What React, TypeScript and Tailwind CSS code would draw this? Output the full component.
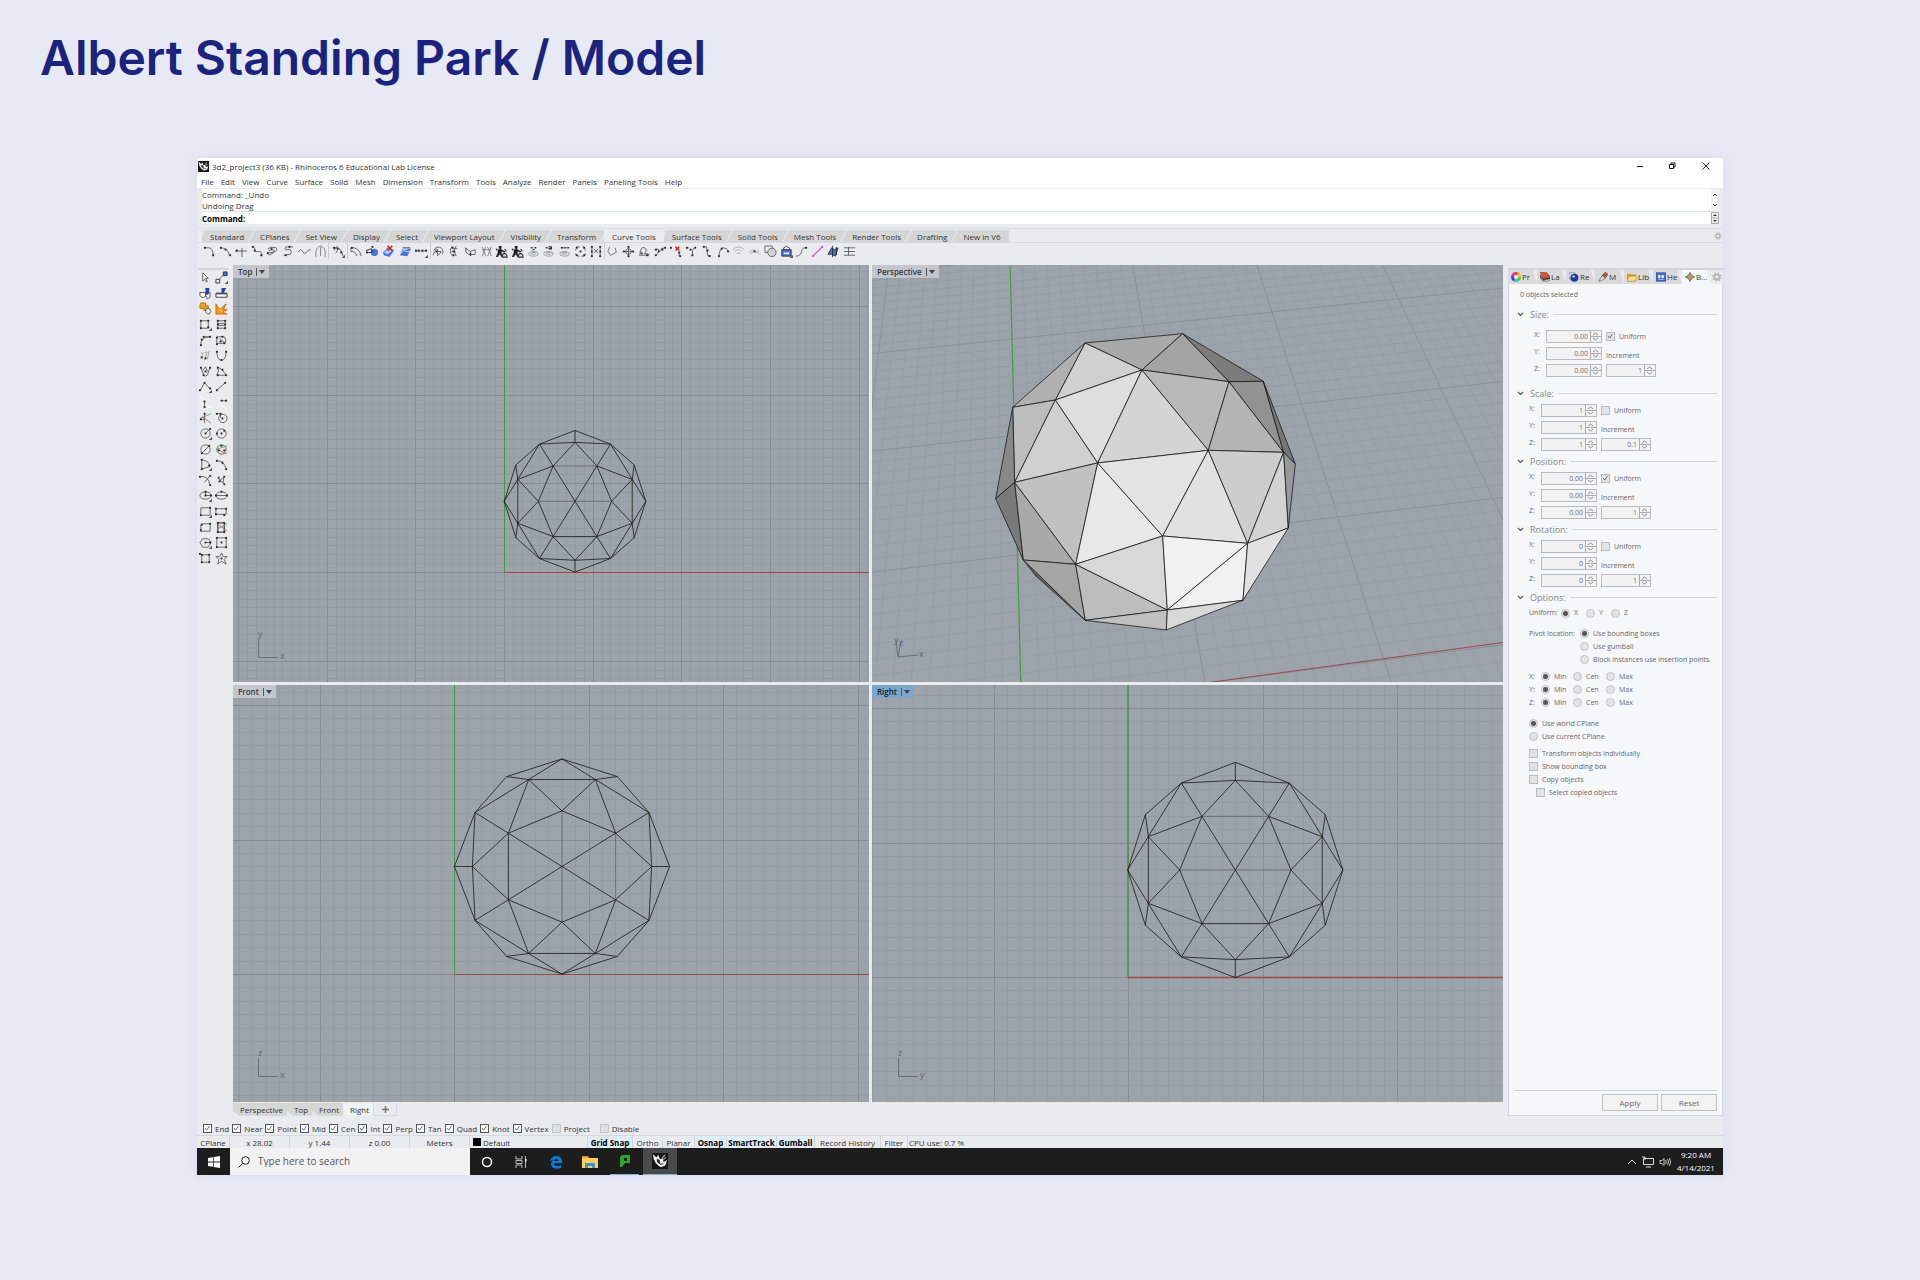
import React from "react";

type Part = { d: string; s?: string; f?: string; w?: number };
type IconDef = { p: Part[]; dots?: number[][]; menu?: boolean };

const INK = "#505050";
const BLUE = "#4a74d8";

function Glyph({ icon }: { icon: IconDef }) {
  return (
    <svg viewBox="0 0 14 14" className="h-[13px] w-[13px] shrink-0" aria-hidden="true">
      {icon.p.map((q, i) => (
        <path key={i} d={q.d} fill={q.f ?? "none"} stroke={q.s ?? (q.f ? "none" : INK)} strokeWidth={q.w ?? 0.9} />
      ))}
      {(icon.dots ?? []).map(([x, y], i) => (
        <rect key={i} x={x - 1} y={y - 1} width={2} height={2} fill="#2a2a2a" />
      ))}
      {icon.menu && <path d="M14 10.500v3.500h-3.500z" fill="#555" />}
    </svg>
  );
}

const k = (d: string, dots?: number[][], menu?: boolean, s?: string): IconDef => ({ p: [{ d, s }], dots, menu });

const person: IconDef = {
  p: [
    { d: "M4 1h3v3h-3zM3 5l3-1 3 2 2 1-1 1-3-1v2l2 4h-2l-2-3-2 3h-2l2-5z", f: "#222" },
    { d: "M8 13q0-4 2-4q3 1 3 4zM10 5q2 0 2 2M1 4l2 2", s: "#333", w: 1.2 },
  ],
};
const disc = (d: string): IconDef => ({
  p: [
    { d: "M2 9.500a5 2.500 0 1 0 10 0a5 2.500 0 1 0-10 0M4.500 9a2.500 1 0 1 0 5 0a2.500 1 0 1 0-5 0", s: "#8a8a8a" },
    { d, s: "#333", w: 1.5 },
  ],
});

const toolGroups: { w: string; icons: IconDef[] }[] = [
  {
    w: "w-[126px]",
    icons: [
      k("M1 3h5q5 0 5 9", [[2, 3], [11, 11]]),
      k("M1 3q9 0 10 8", [[2, 3], [7, 5], [12, 11]]),
      k("M0 6.500h13M7.500 3v10", [[2, 6]]),
      k("M1 2q4 0 3 4q0 2 4 1q4-1 4 5", [[2, 2], [4, 6], [11, 11]]),
      k("M2 4q4-3 9-1q2 2-1 4q-5 2-9 1M3 6q5-2 6 0q0 3-6 5", [[2, 9], [6, 4]]),
      k("M12 2h-6q-4 0-2 3h5q2 2 0 5l-7 1", [[8, 2], [4, 11]]),
      k("M0 8q3-5 5-1t5 0t3-1"),
      k("M2 13v-5q0-5 5-7q5 2 5 7v5M7 2v10", undefined, false, "#777"),
    ],
  },
  { w: "w-[19px]", icons: [k("M1 3q8-1 9 4l2 5M2 6l4-5M7 4l-3 5", [[2, 3], [6, 4], [10, 8]], true)] },
  {
    w: "w-[83px]",
    icons: [
      k("M1 3q9-1 11 9M1 7q5-1 6 5M1 3v4", [[2, 3]]),
      { p: [{ d: "M5 8a4 4 0 1 0 8 0a4 4 0 1 0-8 0", f: BLUE }, { d: "M0 6l6-2 1 4M1 8h5", s: "#222" }], dots: [[1, 8], [7, 2]] },
      { p: [{ d: "M1 8l6-6 6 4-5 7-6-2z", f: BLUE }, { d: "M2 8l5-4 4 2-5 4z", f: "#b9cbf5" }, { d: "M6 1l5 5M11 1l-5 5", s: "#e03030", w: 2 }] },
      { p: [{ d: "M1 11l3-7h9l-4 8z", f: BLUE }, { d: "M4 4l3 3h6M2 9q4-6 7-4", s: "#dbe5fb" }, { d: "M4 3h8", s: "#333" }] },
      k("M0 6.500h13", [[1, 6], [4, 6], [8, 6], [12, 6]], true),
    ],
  },
  {
    w: "w-[174px]",
    icons: [
      k("M2 6a5 5 0 1 1 9 4M1 11q4-9 5-6v7M4 7h6l-3 4", [[5, 7]]),
      k("M5 1q-5 5 0 11M9 1q-4 4 0 11M5 4h5M4 7h4", [[5, 3], [6, 7], [6, 11]]),
      k("M1 3l6 4 5-2M2 8q4 4 10 2M2 3v5M7 7v5M12 5v5", [[7, 10]]),
      k("M2 2q4 5 0 10M6 2q-3 5 0 10M8 2q4 5 0 10M12 2q-3 5 0 10M2 5h10", undefined, false, "#777"),
      person,
      person,
      disc("M4 3h2M8 3h2M6 5h2"),
      disc("M4 3h2M7 2h3v2h-3"),
      disc("M3 3h3M7 3h2M10 3h2"),
      k("M3 2h3M9 2h2M2 4v2M12 4v2M2 9v2M12 9v2M4 12h2M8 12h3", [[3, 3], [11, 3], [3, 11], [11, 11], [7, 7]]),
      k("M2 1v12M11 1v12M4 4l5 5M4 9l5-5", [[2, 2], [2, 7], [2, 12], [11, 2], [11, 7], [11, 12]]),
    ],
  },
  {
    w: "w-[253px]",
    icons: [
      k("M4 2l-2 5 3 4 6-3-1-5", undefined, false, "#666"),
      k("M7 1v12M1 7h12M4 7a3 3 0 1 0 6 0a3 3 0 1 0-6 0", [[7, 2], [7, 12], [2, 7], [12, 7]]),
      k("M2 10q1-9 5-7t0 6l5 1M1 11h11", [[4, 9], [10, 11]]),
      k("M1 5q5-2 4 2q3 0 3-3l4-1M2 11l3-3", [[2, 5], [5, 7], [9, 5], [12, 3], [2, 11]]),
      { p: [{ d: "M7 2l4 4M11 2l-4 4", s: "#e02020", w: 1.6 }, { d: "M1 3h2M11 8v4" }], dots: [[2, 3], [11, 8], [12, 12]] },
      k("M2 3h2M10 3l-2 3v6", [[2, 3], [6, 5], [11, 3], [8, 11]]),
      k("M3 2h3l1 9 4 1", [[3, 2], [7, 6], [9, 12]]),
      k("M2 12q1-9 5-9t5 4", [[2, 12], [5, 4], [12, 7]]),
      k("M1 5q6-6 12 0M3 7q4-4 8 0M5 9h4", undefined, false, "#a5a5a5"),
      k("M1 8l4-3 3 3 4-2M3 10l4-5 5 5", [[7, 7]], false, "#a5a5a5"),
      { p: [{ d: "M1 1h8v7h-8z", s: "#555" }, { d: "M4 8a4 4 0 1 0 9 0a4 4 0 1 0-9 0", f: "#cfd2d8", s: "#555" }] },
      { p: [{ d: "M2 5h10v7h-10z", f: BLUE, s: "#222" }, { d: "M4 3q3-3 6 0v2h-6z", f: "#fff", s: "#222" }, { d: "M4 8h6v2h-6z", f: "#dbe5fb" }], menu: true },
      k("M1 12q5 0 6-5t6-4", [[12, 3]]),
      { p: [{ d: "M2 12l10-10", s: "#e33fe0", w: 1.2 }, { d: "M1 11h2v2h-2zM11 1h2v2h-2z", f: "#e33fe0" }] },
      { p: [{ d: "M1 10l4-7 3 2 4-2-3 9-4-2z", f: BLUE, s: "#333" }, { d: "M6 1v12M10 2v9", s: "#222" }] },
      k("M1 3h12M1 7h12M1 11h12M6 2v9"),
    ],
  },
];

const sideIcons: IconDef[] = [
  k("M4 2v9l2-2 2 3 1-1-2-3h3z"),
  { p: [{ d: "M2 12l7-8" }, { d: "M9 1h4v4h-4z", f: BLUE, s: "#223" }, { d: "M1 9h4v4h-4z", f: "#eee", s: "#222" }], menu: true },
  { p: [{ d: "M1 6h6v4q-4 3-6-1z", f: "#fff", s: "#333" }, { d: "M7 1h4v7h-4z", f: "#1d3fae" }, { d: "M7 9l5-3v5l-3 2z", f: "#dfe3ea", s: "#555" }] },
  { p: [{ d: "M1 7h12v4h-12z", f: "#fff", s: "#222" }, { d: "M7 1h5l-3 6h-2z", f: "#1d3fae" }, { d: "M1 7h12", w: 2 }] },
  { p: [{ d: "M2 1h5v3h3v5h-5v-2h-4v-4z", f: "#f0a020", s: "#a86c10" }, { d: "M7 8q4-3 6 2l-2 3q-4 0-4-5z", f: "#eee", s: "#444" }] },
  { p: [{ d: "M1 13l0-11 4 6 7-6-3 6 4 0-5 3 5 2z", f: "#f59e0b", s: "#d05c10" }, { d: "M5 8l3 3", s: "#fff0c0" }] },
  k("M2 3h8v8h-8z", [[2, 3], [10, 3], [2, 11], [10, 10]], true),
  k("M3 3h8v3h-8zM3 8h8v3h-8z", [[3, 3], [11, 3], [3, 11], [11, 11], [3, 7], [11, 7]]),
  k("M2 13q-1-10 10-10h-7", [[3, 6], [12, 3], [5, 3], [2, 12]]),
  k("M2 3h8q3 3 1 7h-9zM5 5l5 4", [[2, 4], [8, 3], [2, 11], [10, 10], [6, 8]]),
  k("M2 5q3-2 2 1l-2 5M6 4q4-2 2 2l-2 6M11 2l-2 9", [[3, 9], [7, 10]], false, "#999"),
  k("M2 2q0 10 5 10t5-10", [[2, 3], [7, 12], [12, 3]]),
  k("M2 2l3 9q2 2 4 0l3-9M4 6l3-4 2 5", [[2, 3], [7, 7], [12, 3], [5, 11]]),
  k("M3 2q2 4-1 9h10q-3-6-9-9", [[3, 3], [3, 11], [12, 11], [8, 5]]),
  k("M1 12l5-9 6 7", [[1, 11], [6, 3], [12, 9]], true),
  k("M2 11l9-8", [[2, 11], [11, 3]]),
  { p: [{ d: "M1 1q6 1 5 6t7 6", s: "#fff" }, { d: "M6 5v8" }], dots: [[6, 6], [6, 12]] },
  { p: [{ d: "M1 1q6 1 5 6t7 6", s: "#fff" }, { d: "M7 5h6" }], dots: [[7, 5], [12, 5]] },
  { p: [{ d: "M1 8l12-5", s: "#42b05a" }, { d: "M3 6l10 7", s: "#e04848" }, { d: "M6 2v11M1 9h5" }], dots: [[6, 3], [2, 9]] },
  k("M4 8a4 4 0 1 0 9 0a4 4 0 1 0-9 0M2 3h4v4", [[2, 3], [6, 3], [8, 8]]),
  k("M2 7a5 5 0 1 0 10 0a5 5 0 1 0-10 0M7 7l5-5", [[7, 7], [12, 2]], true),
  k("M2 7a5 5 0 1 0 10 0a5 5 0 1 0-10 0", [[2, 7], [7, 7], [10, 4]]),
  k("M2 7a5 5 0 1 0 10 0a5 5 0 1 0-10 0M3 11l8-8", [[3, 11], [11, 3]]),
  { p: [{ d: "M2 7a5 5 0 1 0 10 0a5 5 0 1 0-10 0" }, { d: "M1 7l12-4", s: "#42b05a" }, { d: "M3 7l10 5", s: "#e04848" }], dots: [[7, 3], [4, 8], [10, 8]] },
  k("M3 2q8 1 9 7l-9 3z", [[3, 2], [3, 12], [11, 8]], true),
  k("M2 3q8 0 10 9", [[2, 3], [8, 5], [12, 12]]),
  k("M1 3q9-2 11 9M6 9l5-6", [[1, 3], [12, 2], [12, 12]]),
  k("M4 5l5 5v-6l-5 4", [[4, 4], [10, 3], [10, 11], [5, 8]], false, "#555"),
  k("M1 7a6 4 0 1 0 12 0a6 4 0 1 0-12 0M7 3v4h6", [[7, 7], [7, 3], [13, 7]], true),
  k("M1 7a6 4 0 1 0 12 0a6 4 0 1 0-12 0M1 7h12", [[1, 7], [13, 7], [7, 3]]),
  k("M2 3h10v8h-10z", [[2, 11], [12, 3]], true),
  k("M1 4h11v6h-11z", [[1, 4], [12, 4], [1, 10], [10, 11]]),
  k("M4 3h8v8h-10v-6q0-2 2-2", [[3, 4], [12, 3], [2, 10]]),
  { p: [{ d: "M3 2h7v10h-7z", w: 1.500 }, { d: "M2 9l11-6", s: "#42b05a" }, { d: "M4 4l9 7", s: "#e04848" }], dots: [[3, 2], [10, 2], [3, 12], [10, 12]] },
  k("M4 3h6l3 4-3 5h-6l-3-5zM7 7h6", [[7, 7], [12, 7]], true),
  k("M2 2h10v10h-10z", [[2, 2], [12, 2], [2, 12], [12, 12], [7, 7]]),
  k("M3 3h8v8h-8z", [[3, 3], [11, 3], [3, 11], [11, 11], [1, 2]]),
  k("M7 1l2 4h4l-3 3 2 5-5-3-4 3 1-5-3-3h4z", [[7, 7]]),
];

const menus = ["File", "Edit", "View", "Curve", "Surface", "Solid", "Mesh", "Dimension", "Transform", "Tools", "Analyze", "Render", "Panels", "Paneling Tools", "Help"];
const ribbon = ["Standard", "CPlanes", "Set View", "Display", "Select", "Viewport Layout", "Visibility", "Transform", "Curve Tools", "Surface Tools", "Solid Tools", "Mesh Tools", "Render Tools", "Drafting", "New in V6"];

/* ---------- Viewports ---------- */

const MINOR = "#949ba3";
const MAJOR = "#868b93";
const GREEN = "#439a43";
const RED = "#a04848";

function Grid({ x0, y0, x1, y1, ox, oy, step }: { x0: number; y0: number; x1: number; y1: number; ox: number; oy: number; step: number }) {
  const out: React.ReactNode[] = [];
  for (let i = Math.ceil((x0 - ox) / step); ox + i * step < x1; i++) {
    const x = Math.round(ox + i * step) + 0.5;
    out.push(<path key={"v" + i} d={`M${x} ${y0}V${y1}`} stroke={i % 10 === 0 ? MAJOR : MINOR} />);
  }
  for (let i = Math.ceil((y0 - oy) / step); oy + i * step < y1; i++) {
    const y = Math.round(oy + i * step) + 0.5;
    out.push(<path key={"h" + i} d={`M${x0} ${y}H${x1}`} stroke={i % 10 === 0 ? MAJOR : MINOR} />);
  }
  return <g>{out}</g>;
}

type Seg = [number, number, number, number];
const quarter: Seg[] = [
  [0, -323, -166, -270], [0, -323, -261, -162], [-166, -270, -100, -261], [-166, -270, -261, -162],
  [-100, -261, 0, -261], [-100, -261, 0, -167], [-100, -261, -161, -100], [0, -167, -161, -100],
  [-261, -162, 0, 0], [-161, -100, -269, 0], [-261, -162, -269, 0], [-261, -162, -323, 0],
];

function Wire({ cx, cy, r, turned }: { cx: number; cy: number; r: number; turned?: boolean }) {
  const f = r / 323;
  const seg = (x1: number, y1: number, x2: number, y2: number) => {
    const a = turned ? [y1, x1, y2, x2] : [x1, y1, x2, y2];
    return `M${cx + a[0] * f} ${cy + a[1] * f}L${cx + a[2] * f} ${cy + a[3] * f}`;
  };
  const side = turned ? 161 : -161;
  let main = seg(-323, 0, -269, 0) + seg(323, 0, 269, 0) + seg(-100 * 0 + side, -100, side, 100);
  for (const [x1, y1, x2, y2] of quarter)
    for (const sx of [1, -1]) for (const sy of [1, -1]) main += seg(x1 * sx, y1 * sy, x2 * sx, y2 * sy);
  const soft = seg(0, -167, 0, 167) + seg(-side, -100, -side, 100);
  return (
    <g fill="none">
      <path d={main} stroke="#181818" strokeWidth={0.8} />
      <path d={soft} stroke="#444" strokeWidth={0.8} strokeOpacity={0.6} />
    </g>
  );
}

function AxisMark({ x, y, v, h }: { x: number; y: number; v: string; h: string }) {
  return (
    <g fill="#60666e" className="text-[9px]">
      <path d={`M${x + 0.5} ${y - 18}V${y + 0.5}H${x + 20}`} fill="none" stroke="#6a7078" />
      <text x={x} y={y - 20}>{v}</text>
      <text x={x + 22} y={y + 2}>{h}</text>
    </g>
  );
}

const V: Record<string, [number, number]> = {
  A: [375, 129], B: [668, 101], C: [546, 210], D: [807, 245], E: [910, 244], F: [286, 300], G: [158, 322],
  H: [413, 489], I: [745, 451], J: [971, 457], K: [1006, 492], L: [164, 547], M: [107, 596], N: [347, 793],
  O: [608, 708], P: [863, 730], Q: [985, 684], R: [190, 780], S: [376, 961], T: [622, 930], U: [849, 901],
  W: [619, 990], X: [228, 828],
};
const faces: [string, string][] = [
  ["ABC", "#a9a9a9"], ["BCD", "#a4a4a4"], ["BDE", "#7c7c7c"], ["ACF", "#d0d0d0"], ["AFG", "#b0b0b0"],
  ["CFH", "#dedede"], ["CHI", "#d4d4d4"], ["CID", "#b9b9b9"], ["DIJ", "#b4b4b4"], ["DEJ", "#929292"],
  ["EJK", "#767676"], ["GFL", "#bdbdbd"], ["FLH", "#d0d0d0"], ["GLM", "#888888"], ["LMR", "#797979"],
  ["LRN", "#a9a9a9"], ["LHN", "#c1c1c1"], ["HNO", "#e8e8e8"], ["HOI", "#e3e3e3"], ["IOP", "#e1e1e1"],
  ["IPJ", "#cdcdcd"], ["JPQ", "#d3d3d3"], ["JQK", "#999999"], ["RSX", "#686868"], ["RNS", "#a5a5a5"],
  ["NST", "#bdbdbd"], ["NOT", "#d8d8d8"], ["OTP", "#f1f1f1"], ["PTU", "#f0f0f0"], ["PQU", "#e1e1e1"],
  ["STW", "#bfbfbf"], ["TUW", "#d8d8d8"],
];

function Sphere() {
  return (
    <g transform="translate(960 300) scale(0.3333)" strokeLinejoin="round">
      {faces.map(([n, c]) => (
        <polygon key={n} points={n.split("").map((q) => V[q].join(",")).join(" ")} fill={c} stroke="#1a1a1a" strokeWidth={2.4} />
      ))}
    </g>
  );
}

/* Maps ground-plane grid units onto the perspective view. */
const quad = [[1017.5, 555], [1338, 517], [1272, 312], [1012, 339]];
function project(u: number, v: number): [number, number] {
  const s = u / 2;
  const t = (v - 1) / 2;
  const [[xa, ya], [xb, yb], [xc, yc], [xd, yd]] = quad;
  const dx1 = xb - xc, dx2 = xd - xc, dx3 = xa - xb + xc - xd;
  const dy1 = yb - yc, dy2 = yd - yc, dy3 = ya - yb + yc - yd;
  const det = dx1 * dy2 - dx2 * dy1;
  const g = (dx3 * dy2 - dx2 * dy3) / det;
  const h = (dx1 * dy3 - dx3 * dy1) / det;
  const w = g * s + h * t + 1;
  return [((xb - xa + g * xb) * s + (xd - xa + h * xd) * t + xa) / w, ((yb - ya + g * yb) * s + (yd - ya + h * yd) * t + ya) / w];
}

function PerspectiveGrid() {
  const out: React.ReactNode[] = [];
  const line = (key: string, a: [number, number], b: [number, number], c: string) =>
    out.push(<path key={key} d={`M${a[0]} ${a[1]}L${b[0]} ${b[1]}`} stroke={c} strokeWidth={c === GREEN ? 1.2 : 0.8} />);
  for (let i = -12; i <= 60; i++) line("u" + i, project(i / 10, -0.6), project(i / 10, 7), i === 0 ? GREEN : i % 10 === 0 ? MAJOR : MINOR);
  for (let i = -6; i <= 70; i++) line("v" + i, project(-1.5, i / 10), project(6, i / 10), i % 10 === 0 ? MAJOR : MINOR);
  return <g>{out}</g>;
}

function Viewport({ name, box, active, children }: { name: string; box: string; active?: boolean; children: React.ReactNode }) {
  return (
    <section aria-label={name} className="relative min-h-0 overflow-hidden bg-[#9da3ab]">
      <svg viewBox={box} preserveAspectRatio="xMinYMin slice" className="absolute inset-0 h-full w-full">
        {children}
      </svg>
      <button
        className={
          "absolute top-0 left-0 flex h-[13px] items-center gap-1 pr-1 pl-[5px] text-[8px] leading-3 font-semibold " +
          (active ? "bg-[#7ba7cb] text-[#10202e]" : "bg-[#c3c7cd] text-[#33373c]")
        }
      >
        {name}
        <span className="flex h-2 items-center border-l border-[#555] pl-0.5">
          <svg viewBox="0 0 6 4" className="h-1 w-1.5"><path d="M0 0h6l-3 4z" fill="#444" /></svg>
        </span>
      </button>
    </section>
  );
}

/* ---------- Right panel ---------- */

const wheel = "h-2.5 w-2.5 shrink-0 rounded-full bg-[conic-gradient(#f33,#ec3,#3c3,#3cc,#33f,#c3c,#f33)] flex items-center justify-center";

function PanelIcon({ kind }: { kind: string }) {
  if (kind === "Pr") return <span className={wheel}><span className="h-1 w-1 rounded-full bg-white" /></span>;
  const art: Record<string, React.ReactNode> = {
    La: <><path d="M0 6l4 5 8-3v2l-7 2-5-5z" fill="#fff" stroke="#333" strokeWidth=".6" /><path d="M0 3l4 5 8-2v2l-8 2-4-5z" fill="#333" /><path d="M0 0l8 1 4 4-8 3z" fill="#e2503a" stroke="#7a2010" strokeWidth=".6" /></>,
    Re: <><path d="M0 1h7l1 3-3 4h-5z" fill="#dfe3e8" stroke="#555" strokeWidth=".6" /><circle cx="6.500" cy="7" r="4.800" fill="#1f3f9c" /><circle cx="5.500" cy="5.500" r="1.500" fill="#b9cdf5" /></>,
    M: <><path d="M1 11l4-7 4 3-6 4z" fill="#ddd" stroke="#444" strokeWidth=".7" /><path d="M5 4l4-4 3 3-3 4z" fill="#c4533a" stroke="#444" strokeWidth=".7" /></>,
    Lib: <><path d="M0 2h4l1 1h6v8h-11z" fill="#d69a20" /><path d="M2 5h10l-2 6h-10z" fill="#ffe08a" stroke="#a87410" strokeWidth=".6" /></>,
    He: <><path d="M0 1h12v10h-12z" fill="#4a6fd8" stroke="#223a80" strokeWidth=".8" /><path d="M3 4h2v3h-2zM7 4h2v3h-2zM3 9h6" fill="#fff" stroke="#fff" strokeWidth=".6" /></>,
    "B...": <><path d="M6 0v12M0 6h12" stroke="#444" /><path d="M6 1.500l4.500 4.500-4.500 4.500-4.500-4.500z" fill="#b89a5a" stroke="#444" strokeWidth=".8" /></>,
  };
  return <svg viewBox="0 0 12 12" className="h-2.5 w-2.5 shrink-0" aria-hidden="true">{art[kind]}</svg>;
}

function Gear({ className }: { className: string }) {
  return (
    <svg viewBox="0 0 12 12" className={className} aria-hidden="true">
      <circle cx="6" cy="6" r="3" fill="none" stroke="#b0b2b6" strokeWidth="2" />
      <circle cx="6" cy="6" r="5" fill="none" stroke="#b0b2b6" strokeWidth="1.500" strokeDasharray="2 1.930" />
    </svg>
  );
}

function Spin({ label, value, narrow }: { label: string; value: string; narrow?: boolean }) {
  return (
    <span className={"flex h-[13px] border border-[#b9bbc0] bg-[#f2f2f3] " + (narrow ? "w-[50px]" : "w-14")}>
      <input aria-label={label} defaultValue={value} className="min-w-0 flex-1 bg-transparent pr-0.5 text-right text-[7px] leading-[11px] text-[#6f7175] outline-none" />
      <svg viewBox="0 0 11 11" className="h-[11px] w-[11px] shrink-0" aria-hidden="true">
        <path d="M.5 0v11M0 5.500h11" stroke="#a9abaf" />
        <path d="M3 4l2.500-2 2.500 2M3 7l2.500 2 2.500-2" fill="none" stroke="#8d8f93" />
      </svg>
    </span>
  );
}

const tick = "checked:bg-[image:url('data:image/svg+xml,%3Csvg%20xmlns=%22http://www.w3.org/2000/svg%22%20viewBox=%220%200%209%209%22%3E%3Cpath%20d=%22M1.5%204l2%202.500l3.500-5%22%20fill=%22none%22%20stroke=%22%23444%22/%3E%3C/svg%3E')]";

function Check({ label, checked }: { label: string; checked?: boolean }) {
  return (
    <label className="flex items-center gap-1">
      <input type="checkbox" defaultChecked={checked} className={"h-[9px] w-[9px] shrink-0 appearance-none border border-[#b9bbbf] bg-[#e4e4e5] " + tick} />
      {label}
    </label>
  );
}

function Radio({ label, group, checked, width }: { label: string; group: string; checked?: boolean; width?: string }) {
  return (
    <label className={"flex items-center gap-1 whitespace-nowrap " + (width ?? "")}>
      <input
        type="radio"
        name={group}
        defaultChecked={checked}
        className="h-[9px] w-[9px] shrink-0 appearance-none rounded-full border border-[#c0c1c4] bg-[#e4e4e5] checked:bg-[radial-gradient(circle,#555_0_2px,#e4e4e5_3px)]"
      />
      {label}
    </label>
  );
}

function Heading({ children }: { children: string }) {
  return (
    <h2 className="flex h-[17px] items-center gap-1 text-[9px] text-[#85878b]">
      <svg viewBox="0 0 7 5" className="mr-0.5 h-[5px] w-[7px]" aria-hidden="true"><path d="M1 1l2.500 2.500 2.500-2.500" fill="none" stroke="#555" strokeWidth="1.200" /></svg>
      {children}
      <span className="h-px flex-1 bg-[#d4d5d8]" />
    </h2>
  );
}

function Section({ title, values, inc, uniform, roomy }: { title: string; values: string; inc: string; uniform?: boolean; roomy?: boolean }) {
  return (
    <section>
      <Heading>{title + ":"}</Heading>
      <div className={"flex gap-1 " + (roomy ? "mt-[5px] mb-1.5 ml-[17px]" : "ml-3")}>
        <div>
          {["X:", "Y:", "Z:"].map((a) => (
            <div key={a} className="flex h-[17px] items-center">
              <span className="w-3 pb-1">{a}</span>
              <Spin label={title + " " + a} value={values} />
            </div>
          ))}
        </div>
        <div>
          <div className="flex h-[17px] items-center"><Check label="Uniform" checked={uniform} /></div>
          <div className="flex h-[17px] items-center pt-1">Increment</div>
          <div className="flex h-[17px] items-center"><Spin label={title + " increment"} value={inc} narrow /></div>
        </div>
      </div>
    </section>
  );
}

function Panel() {
  return (
    <aside className="mt-[3px] mb-[3px] flex w-[215px] shrink-0 flex-col border-t-2 border-[#cfd5e3] text-[7px] leading-[10px] text-[#66686c]">
      <div className="flex h-3.5 items-stretch bg-[#eaebee] text-[8px] text-[#333]">
        {["Pr", "La", "Re", "M", "Lib", "He", "B..."].map((t) => (
          <button
            key={t}
            className={
              "flex w-[29px] items-center gap-px pl-[3px] whitespace-nowrap [clip-path:polygon(0_0,85%_0,100%_100%,0_100%)] " +
              (t === "B..." ? "bg-[#f6f7f9]" : "bg-[#dadadb]")
            }
          >
            <PanelIcon kind={t} />
            {t}
          </button>
        ))}
        <button aria-label="Panel options" className="flex flex-1 items-center justify-center"><Gear className="h-2.5 w-2.5" /></button>
      </div>
      <div className="flex flex-1 flex-col border border-t-0 border-[#cfd5e3] bg-[#f6f7f9] pr-[5px] pb-1 pl-[5px]">
        <p className="flex h-[22px] items-center pl-1.5">0 objects selected</p>
        <div className="pl-[3px]">
          <Section title="Size" values="0.00" inc="1" uniform roomy />
          <Section title="Scale" values="1" inc="0.1" />
          <Section title="Position" values="0.00" inc="1" uniform />
          <Section title="Rotation" values="0" inc="1" />
          <Heading>Options:</Heading>
        </div>
        <div className="pl-[15px]">
          <div className="flex h-3.5 items-center">
            <span className="w-8">Uniform:</span>
            <Radio group="uni" label="X" checked width="w-[25px]" />
            <Radio group="uni" label="Y" width="w-[25px]" />
            <Radio group="uni" label="Z" />
          </div>
          <div className="mt-[7px] flex">
            <span className="flex h-[13px] w-[51px] items-center whitespace-nowrap">Pivot location:</span>
            <div>
              {["Use bounding boxes", "Use gumball", "Block instances use insertion points"].map((t, i) => (
                <div key={t} className="flex h-[13px] items-center"><Radio group="pivot" label={t} checked={i === 0} /></div>
              ))}
            </div>
          </div>
          <div className="mt-1">
            {["X:", "Y:", "Z:"].map((a) => (
              <div key={a} className="flex h-[13px] items-center">
                <span className="w-3">{a}</span>
                <Radio group={"p" + a} label="Min" checked width="w-8" />
                <Radio group={"p" + a} label="Cen" width="w-[33px]" />
                <Radio group={"p" + a} label="Max" />
              </div>
            ))}
          </div>
          <div className="mt-2">
            <div className="flex h-[13px] items-center"><Radio group="cp" label="Use world CPlane" checked /></div>
            <div className="flex h-[13px] items-center"><Radio group="cp" label="Use current CPlane" /></div>
          </div>
          <div className="mt-1">
            {["Transform objects individually", "Show bounding box", "Copy objects"].map((t) => (
              <div key={t} className="flex h-[13px] items-center"><Check label={t} /></div>
            ))}
            <div className="flex h-[13px] items-center pl-[7px]"><Check label="Select copied objects" /></div>
          </div>
        </div>
        <div className="mt-auto flex justify-end gap-[3px] border-t border-[#cfd0d3] pt-[3px] text-[8px]">
          <button className="h-[17px] w-14 border border-[#bfc0c4] bg-[#f3f3f4]">Apply</button>
          <button className="h-[17px] w-14 border border-[#bfc0c4] bg-[#f3f3f4]">Reset</button>
        </div>
      </div>
    </aside>
  );
}

/* ---------- Window chrome ---------- */

function RhinoMark({ className }: { className: string }) {
  return (
    <svg viewBox="0 0 18 18" className={className} aria-hidden="true">
      <rect width="18" height="18" fill="#151515" />
      <path d="M1 1l4 4 2-3 2 5 3-1 1 4 4-2-2 6-5 2-3-2-3-3-2-4z" fill="#f2f2f2" />
      <path d="M6 7l2 1 1 4-3-2zM9 13l4-1" fill="#222" stroke="#222" />
      <path d="M15 2q-3 1-3 4a1.500 1.500 0 1 0 2-2" fill="none" stroke="#ddd" />
    </svg>
  );
}

const cell = "flex items-center justify-center whitespace-nowrap border-r border-[#cbd5e2]";
const osnaps = ["End", "Near", "Point", "Mid", "Cen", "Int", "Perp", "Tan", "Quad", "Knot", "Vertex", "Project", "Disable"];

function AppWindow() {
  return (
    <main className="flex h-[1017px] flex-col bg-[#eaebee] font-['Open_Sans','Noto_Sans',sans-serif] text-[8px] leading-[11px] text-[#333] shadow-[0_0_8px_rgba(120,125,160,0.15)]">
      <header className="flex h-4 items-center bg-white pl-px">
        <RhinoMark className="mr-[3px] h-[11px] w-[11px]" />
        <h2>3d2_project3 (36 KB) - Rhinoceros 6 Educational Lab License</h2>
        <div className="ml-auto flex h-full">
          <button aria-label="Minimize" className="flex w-8 items-center justify-center"><svg viewBox="0 0 8 8" className="h-2 w-2"><path d="M1 4.500h6" stroke="#111" /></svg></button>
          <button aria-label="Restore" className="flex w-8 items-center justify-center"><svg viewBox="0 0 8 8" className="h-2 w-2"><path d="M1.500 2.500h4v4h-4zM3 2.500v-1.500h4v4h-1.500" fill="none" stroke="#111" /></svg></button>
          <button aria-label="Close" className="flex w-[35px] items-center justify-center"><svg viewBox="0 0 8 8" className="h-2 w-2"><path d="M.5.5l7 7M7.500.5l-7 7" stroke="#111" strokeWidth=".9" /></svg></button>
        </div>
      </header>
      <nav className="flex h-3.5 items-center gap-[7px] bg-white pl-1">
        {menus.map((m) => <button key={m} className="whitespace-nowrap">{m}</button>)}
      </nav>
      <div className="mt-px mr-1 ml-[5px] flex h-[35px] bg-white leading-[11px]">
        <div className="flex-1">
          <div className="h-[23px] border-b border-[#dbe2ec]">
            <p>Command: _Undo</p>
            <p>Undoing Drag</p>
          </div>
          <label className="flex h-3 items-center font-bold text-black">
            Command:
            <input className="ml-1 flex-1 bg-transparent outline-none" />
          </label>
        </div>
        <div className="flex w-2 flex-col justify-between bg-[#f1f1f3]">
          <svg viewBox="0 0 8 22" className="h-[22px] w-2"><path d="M2 7l2-2 2 2M2 15l2 2 2-2" fill="none" stroke="#444" /></svg>
          <svg viewBox="0 0 8 12" className="h-3 w-2"><path d="M.5.5h7v11h-7zM0 6h8" fill="none" stroke="#aaa" /><path d="M2 4l2-2 2 2zM2 8l2 2 2-2z" fill="#333" /></svg>
        </div>
      </div>
      <div className="mt-1 flex h-[14px] items-end border-t border-[#dde0ea]">
        <div className="ml-[5px] flex h-3 items-stretch">
          {ribbon.map((t) => (
            <button
              key={t}
              className={
                "relative px-2 whitespace-nowrap before:absolute before:top-0 before:-left-px before:h-full before:w-px before:-skew-x-[28deg] before:bg-[#eceef3] " +
                (t === "Curve Tools" ? "bg-[#eaebee]" : "bg-[#d6d6d6]")
              }
            >
              {t}
            </button>
          ))}
        </div>
        <Gear className="mr-px ml-auto h-2 w-2 self-center" />
      </div>
      <div className="flex h-[23px] items-start border-t border-[#d3dae6] pl-[5px]">
        {toolGroups.map((g, i) => (
          <div key={i} className={"flex h-4 items-center justify-around " + g.w + (i ? " border-l border-[#c9cbd1]" : "")}>
            {g.icons.map((icon, j) => <button key={j} aria-label={"Curve tool " + (i + 1) + "-" + (j + 1)}><Glyph icon={icon} /></button>)}
          </div>
        ))}
      </div>

      <div className="flex min-h-0 flex-1">
        <div className="w-9 shrink-0 pt-[3px]">
          <div className="mr-1 ml-px grid h-[298px] grid-cols-2 grid-rows-[repeat(19,minmax(0,1fr))] border-t-2 border-[#cfd5e3]">
            {sideIcons.map((icon, i) => (
              <button key={i} aria-label={"Tool " + (i + 1)} className="flex items-center justify-center"><Glyph icon={icon} /></button>
            ))}
          </div>
        </div>
        <div className="flex min-w-0 flex-1 flex-col">
          <div className="grid min-h-0 flex-1 grid-cols-[636fr_631fr] grid-rows-2 gap-[3px]">
            <Viewport name="Top" box="233 265 636 417">
              <Grid x0={233} y0={265} x1={869} y1={683} ox={504} oy={572} step={8.865} />
              <path d="M504.500 265V572" stroke={GREEN} />
              <path d="M504 572.500H869" stroke={RED} />
              <Wire cx={575} cy={501.300} r={70.800} turned />
              <AxisMark x={258} y={657} v="y" h="x" />
            </Viewport>
            <Viewport name="Perspective" box="872 265 631 417">
              <PerspectiveGrid />
              <path d="M1209 682.500L1503 642.500" stroke={RED} />
              <Sphere />
              <g fill="#60666e" className="text-[9px]">
                <path d="M898 657L896 641M898 657L918 655M898 657L901 641" fill="none" stroke="#6a7078" />
                <text x="894" y="643">y</text><text x="899" y="646">z</text><text x="919" y="657">x</text>
              </g>
            </Viewport>
            <Viewport name="Front" box="233 685 636 417">
              <Grid x0={233} y0={685} x1={869} y1={1103} ox={454} oy={974} step={13.450} />
              <path d="M454.500 685V974" stroke={GREEN} />
              <path d="M454 974.500H869" stroke={RED} />
              <Wire cx={562} cy={866.500} r={107.600} />
              <AxisMark x={258} y={1076} v="z" h="x" />
            </Viewport>
            <Viewport name="Right" box="872 685 631 417" active>
              <Grid x0={872} y0={685} x1={1503} y1={1103} ox={1128} oy={977} step={13.450} />
              <path d="M1128 685V977" stroke={GREEN} strokeWidth="1.500" />
              <path d="M1128 977.500H1503" stroke={RED} strokeWidth="1.500" />
              <Wire cx={1235.300} cy={870} r={107.600} turned />
              <AxisMark x={898} y={1076} v="z" h="y" />
            </Viewport>
          </div>
          <div className="flex h-[17px] shrink-0 items-start pt-px">
            {["Perspective", "Top", "Front", "Right"].map((t) => (
              <button
                key={t}
                className={
                  "h-[13px] pr-1 pl-[7px] [clip-path:polygon(0_0,100%_0,100%_100%,6px_100%,0_60%)] " +
                  (t === "Right" ? "bg-[#f1f2f5]" : "bg-[#d6d6d6]")
                }
              >
                {t}
              </button>
            ))}
            <button aria-label="New viewport tab" className="flex h-[13px] w-6 items-center justify-center border-x border-b border-[#d3dae6]">
              <svg viewBox="0 0 7 7" className="h-[7px] w-[7px]"><path d="M3.500 0v7M0 3.500h7" stroke="#777" strokeWidth="1.500" /></svg>
            </button>
          </div>
        </div>
        <div className="w-[5px] shrink-0" />
        <Panel />
      </div>

      <div className="flex h-4 shrink-0 items-center gap-[3px] pt-0.5 pl-1.5">
        {osnaps.map((t, i) => (
          <label key={t} className={"flex items-center gap-[3px] " + (t === "Disable" ? "ml-[7px]" : "")}>
            <input
              type="checkbox"
              defaultChecked={i < 11}
              className={(i < 11 ? "h-[9px] w-[9px] shrink-0 appearance-none border border-[#555] bg-white" : "h-[9px] w-[9px] shrink-0 appearance-none border border-[#c4c4c4] bg-[#dfdfdf]") + " " + tick}
            />
            {t}
          </label>
        ))}
      </div>
      <div className="flex h-[13px] shrink-0 items-stretch border-t border-[#d3dae6]">
        <span className={cell + " w-[33px]"}>CPlane</span>
        <span className={cell + " w-[60px]"}>x 28.02</span>
        <span className={cell + " w-[60px]"}>y 1.44</span>
        <span className={cell + " w-[60px]"}>z 0.00</span>
        <span className={cell + " w-[60px]"}>Meters</span>
        <span className="flex w-[118px] items-center gap-0.5 border-r border-[#cbd5e2] pl-[3px]"><span className="h-2 w-2 bg-black" />Default</span>
        <button className={cell + " w-[45px] bg-[#dfeefa] font-bold text-black"}>Grid Snap</button>
        <button className={cell + " w-[30px]"}>Ortho</button>
        <button className={cell + " w-8"}>Planar</button>
        <button className={cell + " w-8 bg-[#dfeefa] font-bold text-black"}>Osnap</button>
        <button className={cell + " w-[50px] bg-[#dfeefa] font-bold text-black"}>SmartTrack</button>
        <button className={cell + " w-[38px] bg-[#dfeefa] font-bold text-black"}>Gumball</button>
        <button className={cell + " w-[66px]"}>Record History</button>
        <button className={cell + " w-[27px]"}>Filter</button>
        <span className="flex items-center pl-px">CPU use: 0.7 %</span>
      </div>

      <footer className="flex h-[27px] shrink-0 items-stretch bg-[#1d1d1d] text-white">
        <button aria-label="Start" className="flex w-[33px] items-center justify-center">
          <svg viewBox="0 0 12 12" className="h-3 w-3"><path d="M0 2l5-.8v4.400h-5zM5.700 1.100l6.300-1.100v5.600h-6.300zM0 6.400h5v4.400l-5-.8zM5.700 6.400h6.300v5.600l-6.300-1.100z" fill="#fff" /></svg>
        </button>
        <label className="flex w-60 items-center bg-[#f2f2f2] pl-2">
          <svg viewBox="0 0 12 12" className="h-3 w-3"><circle cx="7.500" cy="4.500" r="3.800" fill="none" stroke="#222" /><path d="M4.800 7.200l-4.300 4.300" stroke="#222" /></svg>
          <input aria-label="Search" placeholder="Type here to search" className="ml-2 min-w-0 flex-1 bg-transparent text-[10px] text-[#444] outline-none placeholder:text-[#555]" />
        </label>
        <button aria-label="Cortana" className="flex w-[34px] items-center justify-center"><svg viewBox="0 0 12 12" className="h-3 w-3"><circle cx="6" cy="6" r="4.500" fill="none" stroke="#fff" strokeWidth="1.500" /></svg></button>
        <button aria-label="Task view" className="flex w-[34px] items-center justify-center"><svg viewBox="0 0 12 12" className="h-3 w-3"><path d="M1 0v3h6v-3M1 12v-3h6v3M1 4.500h6v3h-6zM10.500 0v12" fill="none" stroke="#bbb" /><path d="M10 3h1.500v2.500h-1.500z" fill="#fff" /></svg></button>
        <button aria-label="Edge" className="flex w-[35px] items-center justify-center">
          <svg viewBox="0 0 16 16" className="h-3.5 w-3.5"><path d="M1 7.500Q2 1 8.200 1Q15 1 15 7.500V9.300H5.500Q6 12.700 9.700 12.700Q12 12.700 14 11.500V14.500Q12 15.700 9 15.700Q2.500 15.700 2.300 9.700Q2.500 6.500 5.500 5Q3 5.200 1 7.500ZM5.600 6.800H10.700Q10.600 4.300 8.300 4.300Q6.200 4.300 5.600 6.800Z" fill="#0a78d6" fillRule="evenodd" /></svg>
        </button>
        <button aria-label="File Explorer" className="flex w-[34px] items-center justify-center">
          <svg viewBox="0 0 16 14" className="h-3.5 w-4"><path d="M0 1h6l1 2h-7z" fill="#e39a1a" /><path d="M0 3h16v10h-16z" fill="#ffcf57" /><path d="M3 13v-5h10v5h-3v-2h-4v2z" fill="#3d8fd9" /></svg>
        </button>
        <button aria-label="PaperCut" className="ml-[3px] flex w-[29px] items-center justify-center border-b border-[#7ab4e8]">
          <svg viewBox="0 0 12 12" className="h-3 w-3"><path d="M3 0h8v8h-5l-3 4h-2v-10zM5 3v3h3v-3z" fill="#2ba52b" fillRule="evenodd" /></svg>
        </button>
        <button aria-label="Rhinoceros" className="ml-1 flex w-[34px] items-center justify-center border-b border-[#7ab4e8] bg-[#4a4a4a]"><RhinoMark className="h-4 w-4" /></button>
        <div className="ml-auto flex items-center gap-[5px] pr-[7px]">
          <svg viewBox="0 0 10 10" className="h-2.5 w-2.5"><path d="M1 7l4-4 4 4" fill="none" stroke="#ddd" /></svg>
          <svg viewBox="0 0 12 12" className="h-3 w-3"><path d="M1.500 2.500h10v6h-10zM4 11h5M0 1h3v3" fill="none" stroke="#ddd" /></svg>
          <svg viewBox="0 0 12 12" className="h-3 w-3"><path d="M1 4.500h2l2-2v7l-2-2h-2zM6.500 4q1.500 2 0 4M8.500 3q2 3 0 6M10.500 2q2 4 0 8" fill="none" stroke="#ddd" strokeWidth=".9" /></svg>
          <div className="w-10 pb-0.5 text-center text-[8px] leading-[13px]">
            <p>9:20 AM</p>
            <p>4/14/2021</p>
          </div>
        </div>
      </footer>
    </main>
  );
}

export default function App() {
  return (
    <div className="min-h-screen bg-[#e7e9f5] pb-[105px]">
      <h1 className="h-[158px] pt-7 pl-10 font-[Inter,sans-serif] text-[48px] leading-[60px] font-semibold text-[#1a237e]">Albert Standing Park / Model</h1>
      <div className="px-[197px]">
        <AppWindow />
      </div>
    </div>
  );
}
